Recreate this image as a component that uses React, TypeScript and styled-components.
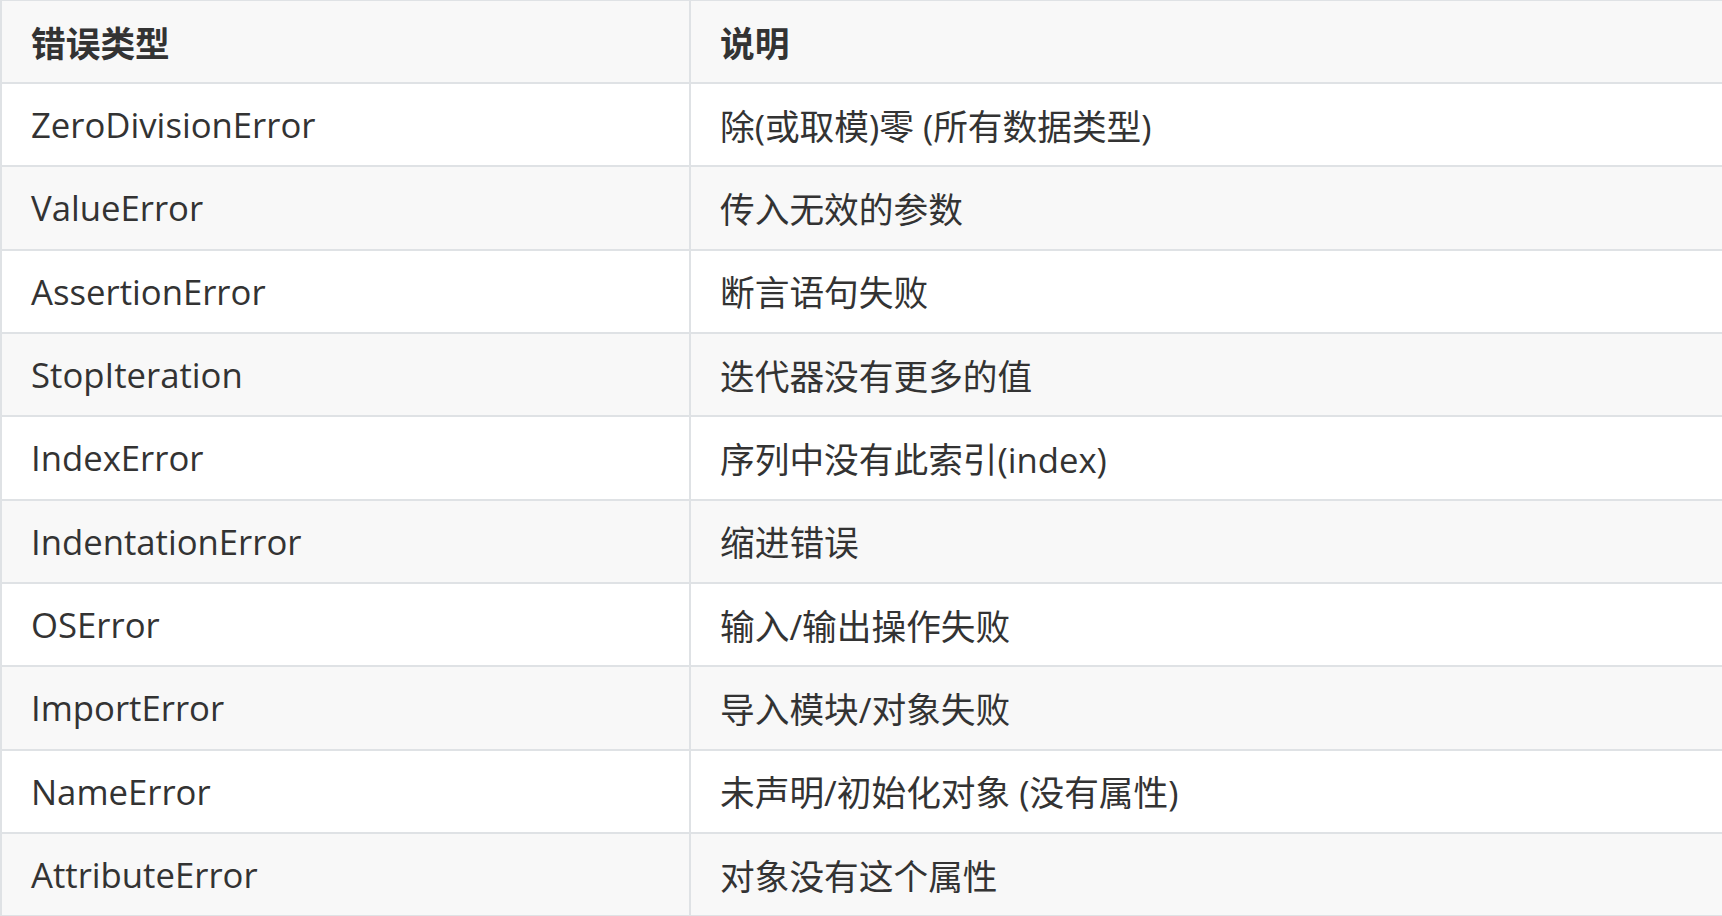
import styled, { createGlobalStyle } from 'styled-components';

const errors: [string, string][] = [
    ['ZeroDivisionError', '除(或取模)零 (所有数据类型)'],
    ['ValueError', '传入无效的参数'],
    ['AssertionError', '断言语句失败'],
    ['StopIteration', '迭代器没有更多的值'],
    ['IndexError', '序列中没有此索引(index)'],
    ['IndentationError', '缩进错误'],
    ['OSError', '输入/输出操作失败'],
    ['ImportError', '导入模块/对象失败'],
    ['NameError', '未声明/初始化对象 (没有属性)'],
    ['AttributeError', '对象没有这个属性'],
];

const App = () => {
    return (
        <>
            <GlobalStyle />
            <StyledTable>
                <StyledRow $header $striped>
                    <StyledHeadCell>错误类型</StyledHeadCell>
                    <StyledHeadCell>说明</StyledHeadCell>
                </StyledRow>
                {errors.map(([name, desc], i) => (
                    <StyledRow key={name} $striped={i % 2 === 1}>
                        <StyledCell>{name}</StyledCell>
                        <StyledCell>{desc}</StyledCell>
                    </StyledRow>
                ))}
            </StyledTable>
        </>
    );
};

export default App;

const GlobalStyle = createGlobalStyle`
    html, body {
        margin: 0;
        padding: 0;
        background: #ffffff;
        overflow: hidden;
    }
`
const StyledTable = styled.div`
    width: 1800px;
    font-family: "Open Sans", "Noto Sans CJK SC", sans-serif;
    color: #333333;
`
const StyledRow = styled.div<{ $header?: boolean; $striped?: boolean }>`
    display: grid;
    grid-template-columns: 689px 1fr;
    box-sizing: border-box;
    height: ${(props) => (props.$header ? '84px' : '83.333px')};
    border-top: ${(props) => (props.$header ? '1px solid #dfe2e5' : 'none')};
    border-bottom: 2px solid #dfe2e5;
    background: ${(props) => (props.$striped ? '#f8f8f8' : '#ffffff')};
`
const StyledCell = styled.div`
    display: flex;
    align-items: center;
    box-sizing: border-box;
    border-left: 2px solid #dfe2e5;
    padding-left: 29px;
    font-size: 34.7px;
    white-space: nowrap;
`
const StyledHeadCell = styled(StyledCell)`
    font-weight: 700;
`
